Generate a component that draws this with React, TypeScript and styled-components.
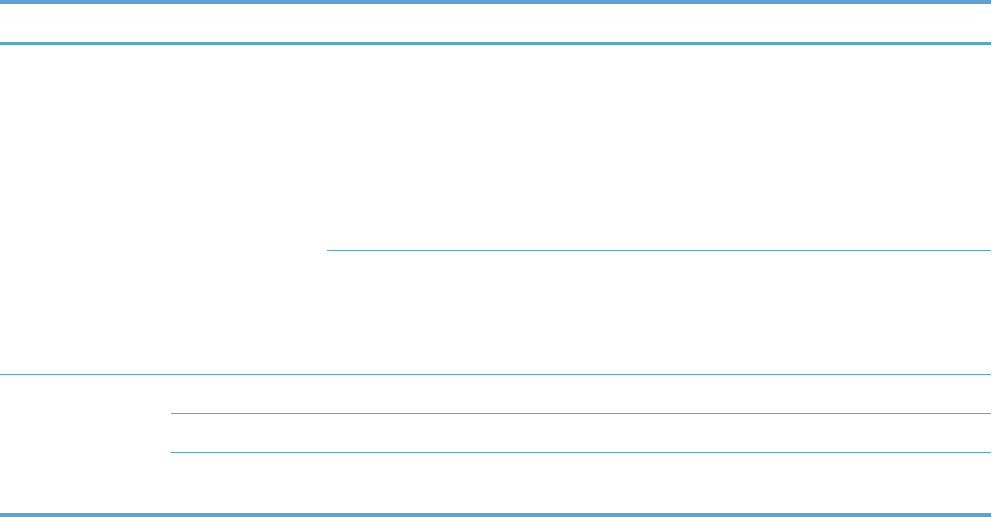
import React from "react";
import styled, { createGlobalStyle } from "styled-components";

const line = "#5ba3d6";

const Global = createGlobalStyle`
  html, body { margin: 0; padding: 0; background: #ffffff; }
  body { font-family: "Liberation Sans", Arial, sans-serif; }
`;

const Table = styled.div`
  width: 991px;
  border-top: 4px solid ${line};
  border-bottom: 4px solid ${line};
  display: flex;
  flex-direction: column;
`;

const HeaderRow = styled.div`
  display: grid;
  grid-template-columns: 171px 156px 1fr;
  height: 38px;
  border-bottom: 3px solid ${line};
`;

const Group = styled.div<{ $cols: string; $last?: boolean }>`
  display: grid;
  grid-template-columns: ${(p) => p.$cols};
  border-bottom: ${(p) => (p.$last ? "none" : `1px solid ${line}`)};
`;

const Cell = styled.div`
  min-height: 0;
`;

const Stack = styled.div`
  display: flex;
  flex-direction: column;
`;

const SubCell = styled.div<{ $h: number; $rule?: boolean }>`
  height: ${(p) => p.$h}px;
  border-bottom: ${(p) => (p.$rule ? `1px solid ${line}` : "none")};
`;

export default function App() {
  return (
    <>
      <Global />
      <Table>
        <HeaderRow>
          <Cell />
          <Cell />
          <Cell />
        </HeaderRow>
        <Group $cols="171px 156px 1fr">
          <Cell />
          <Cell />
          <Stack>
            <SubCell $h={205} $rule />
            <SubCell $h={123} />
          </Stack>
        </Group>
        <Group $cols="171px 1fr" $last>
          <Cell />
          <Stack>
            <SubCell $h={38} $rule />
            <SubCell $h={38} $rule />
            <SubCell $h={60} />
          </Stack>
        </Group>
      </Table>
    </>
  );
}
